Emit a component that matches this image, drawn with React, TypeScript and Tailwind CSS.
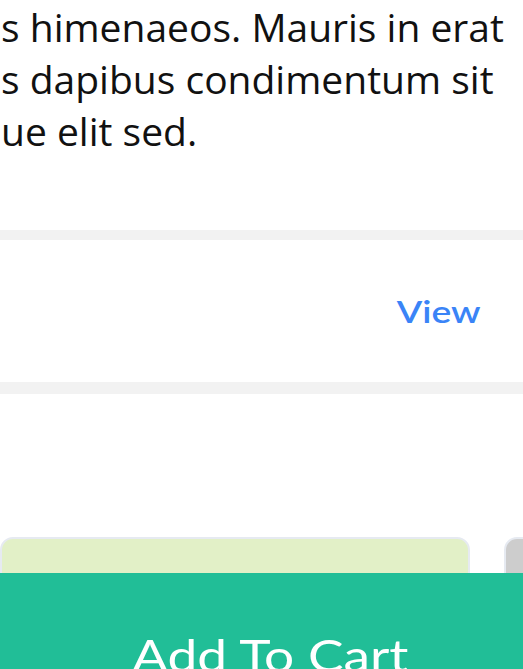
import React from "react";

export default function App() {
  return (
    <div className="relative w-[523px] h-[669px] overflow-hidden bg-white">
      <div
        className="h-[157px] pt-[1px] pl-[1px] text-[39px] leading-[52px] text-[#111111] whitespace-nowrap"
        style={{ fontFamily: '"Open Sans", sans-serif' }}
      >
        <div>s himenaeos. Mauris in erat</div>
        <div>s dapibus condimentum sit</div>
        <div>ue elit sed.</div>
      </div>
      <div className="mt-[73px] h-[10px] bg-[#f2f2f2]" />
      <div className="h-[142px] flex items-center justify-end pr-[42px]">
        <span
          className="inline-block origin-right scale-x-[1.24] text-[30px] font-semibold text-[#3a84f7]"
          style={{ fontFamily: 'Lato, sans-serif' }}
        >
          View
        </span>
      </div>
      <div className="h-[12px] bg-[#f2f2f2]" />
      <div className="mt-[143px] flex gap-[34px]">
        <div className="shrink-0 w-[470px] h-[120px] rounded-[13px] border-[2px] border-[#e6eaf1] bg-[#e2f0c7]" />
        <div className="shrink-0 w-[470px] h-[120px] rounded-[13px] border-[2px] border-[#e6eaf1] bg-[#cdcdcd]" />
      </div>
      <div className="absolute left-0 right-0 top-[573px] h-[120px] bg-[#21be97] flex justify-center">
        <span
          className="inline-block ml-[18px] mt-[49px] origin-center scale-x-[1.21] text-[44px] text-white"
          style={{ fontFamily: 'Lato, sans-serif' }}
        >
          Add To Cart
        </span>
      </div>
    </div>
  );
}
